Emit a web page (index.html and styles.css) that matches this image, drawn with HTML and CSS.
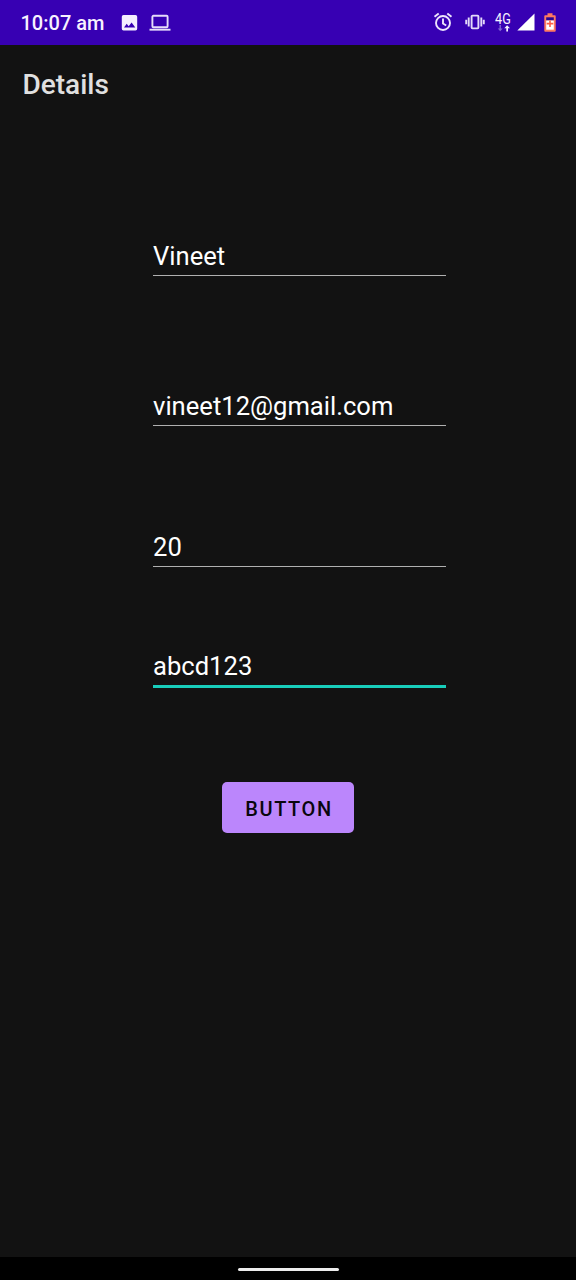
FILE: index.html
```html
<!DOCTYPE html>
<html lang="en">
<head>
<meta charset="utf-8">
<title>Details</title>
<link rel="stylesheet" href="styles.css">
</head>
<body>
<div class="screen">
  <header class="status-bar">
    <span class="clock">10:07 am</span>
    <svg class="icon-picture" width="18" height="18" viewBox="0 0 18 18"><path fill="#f5efff" fill-rule="evenodd" d="M2.500 1h12a1.700 1.700 0 0 1 1.700 1.700v12a1.700 1.700 0 0 1-1.700 1.700h-12a1.700 1.700 0 0 1-1.700-1.700v-12A1.700 1.700 0 0 1 2.500 1zM3 13.500h11.300l-3.700-5-2.900 3.700-2-2.400z"/></svg>
    <svg class="icon-laptop" width="22" height="18" viewBox="0 0 22 18"><g fill="none" stroke="#e6dcfa" stroke-width="1.900"><rect x="3.400" y="1.800" width="15.200" height="11.400" rx="1"/><path d="M.5 15.700h21"/></g></svg>
    <div class="indicators">
      <svg class="icon-alarm" width="20" height="20" viewBox="0 0 20 20"><g fill="none" stroke="#ece4fc" stroke-width="1.900"><circle cx="10" cy="11" r="7"/><path d="M10 6.500v5l3.200 2M1.500 4.800l4.200-3.300M18.500 4.800l-4.200-3.300"/></g></svg>
      <svg class="icon-vibrate" width="20" height="18" viewBox="0 0 20 18"><g fill="none" stroke="#e4daf9" stroke-width="1.900"><rect x="6.600" y="2.600" width="6.800" height="12.800" rx=".8"/><path d="M3.700 4.500v9M16.300 4.500v9M1.200 6.700v4.600M18.800 6.700v4.600"/></g></svg>
      <span class="network">
        <span class="network-type">4G</span>
        <svg class="network-arrows" width="14" height="7" viewBox="0 0 14 7"><path fill="#8264d2" d="M3.500 0h1.400v3.500h1.700L4.200 6.300 1.800 3.500h1.700z"/><path fill="#f5efff" d="M10.300 6.500h1.700V3.300h2L11.100.2 8.300 3.300h2z"/></svg>
      </span>
      <svg class="icon-signal" width="18" height="18" viewBox="0 0 18 18"><path fill="#fff" d="M.3 17.500L17.500.5v17z"/></svg>
      <svg class="icon-battery" width="12" height="19" viewBox="0 0 12 19"><path fill="#ff7960" d="M3.500.3h5v1.900h2.300q.9 0 .9.9v14.700q0 .9-.9.900H1.200q-.9 0-.9-.9V3.100q0-.9.900-.9h2.300z"/><path fill="#2b0594" d="M2.200 4.300h7.600v3.200H2.200z"/><path fill="#fff" d="M2.200 7.500h7.600v9.200H2.200z"/><path fill="#ff5e45" d="M5.200 7.500h1.600v2.300h2.500v1.700H6.800V14H5.200v-2.500H2.700V9.800h2.500z"/></svg>
    </div>
  </header>
  <div class="app-bar"><h1 class="title">Details</h1></div>
  <main class="form">
    <div class="field field-name">Vineet</div>
    <div class="field field-email">vineet12@gmail.com</div>
    <div class="field field-age">20</div>
    <div class="field field-password">abcd123</div>
    <button class="submit" type="button">BUTTON</button>
  </main>
  <footer class="nav-bar"><span class="handle"></span></footer>
</div>
</body>
</html>
```
FILE: styles.css
```css
* { box-sizing: border-box; }
body { margin: 0; background: #121212; font-family: Roboto, "Liberation Sans", sans-serif; }
svg { display: block; flex: none; }
.screen { width: 576px; height: 1280px; display: flex; flex-direction: column; background: #121212; }
.status-bar { height: 44.500px; flex: none; display: flex; align-items: center; padding: 0 20px 0 20.500px; background: #3700b3; color: #f7f2ff; }
.clock { width: 100px; font-size: 20px; font-weight: 500; line-height: 24px; margin-top: 2px; white-space: nowrap; }
.icon-picture { margin-top: 1px; }
.icon-laptop { margin: 1px 0 0 10.500px; }
.indicators { margin-left: auto; display: flex; align-items: center; }
.icon-vibrate { margin-left: 12px; }
.network { display: flex; flex-direction: column; width: 18px; margin-left: 10px; }
.network-type { font-size: 14px; line-height: 12px; letter-spacing: .3px; transform: scaleX(.9); transform-origin: left; }
.network-arrows { margin-left: 1px; }
.icon-signal { margin-left: 4px; }
.icon-battery { margin-left: 9px; }
.app-bar { height: 89.500px; flex: none; display: flex; align-items: flex-start; padding: 24.500px 22.500px 0; }
.title { margin: 0; font-size: 28px; font-weight: 500; line-height: 32px; color: #e0e0e0; }
.form { flex: 1; display: flex; flex-direction: column; align-items: flex-start; padding: 107px 0 0 153px; }
.field { width: 293px; height: 35px; border-bottom: 1px solid #b0b0b0; color: #fff; font-size: 25.600px; line-height: 30px; }
.field-email { margin-top: 115px; }
.field-age { margin-top: 106px; }
.field-password { height: 37px; margin-top: 84px; border-bottom: 3px solid #18cdbb; }
.submit { width: 132px; height: 51px; margin: 94px 0 0 69px; padding: 2px 0 0 2px; border: 0; border-radius: 5px; background: #bb86fc; color: #09060d; font-family: inherit; font-size: 20px; font-weight: 500; letter-spacing: 1.600px; }
.nav-bar { height: 23px; flex: none; display: flex; justify-content: center; align-items: flex-start; padding-top: 11px; background: #000; }
.handle { width: 101px; height: 3px; border-radius: 1.500px; background: #ececec; }
```
